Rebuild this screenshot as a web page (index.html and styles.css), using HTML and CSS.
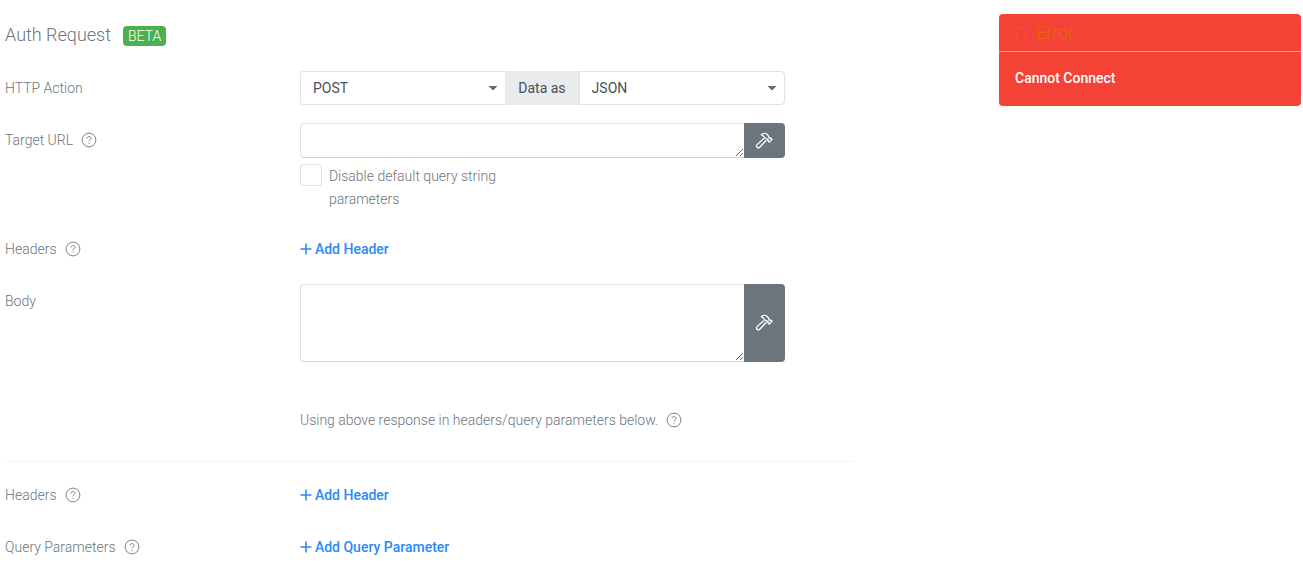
FILE: index.html
```html
<!DOCTYPE html>
<html lang="en">
  <head>
    <meta charset="UTF-8" />
    <meta name="viewport" content="width=device-width, initial-scale=1.0" />
    <title>Auth Request</title>
    <link rel="stylesheet" href="styles.css">
  </head>
  <body>
    <svg class="sprite" aria-hidden="true">
      <symbol id="icon-help" viewBox="0 0 16 16">
        <circle cx="8" cy="8" r="6.9" />
        <path d="M6 6.5C6 5.2 6.8 4.6 8 4.6s2 .7 2 1.7c0 1.4-1.9 1.4-1.9 3" />
        <path d="M8.1 10.6v1.2" />
      </symbol>
      <symbol id="icon-hammer" viewBox="0 0 18 18">
        <path d="M6.4 2.6C8 1.1 10.6 1 12.2 2.5l1.2 1.3c.5.8.2 1.6.7 2.2l.9.5.6-.6 1.4 1.4-2.8 2.8-1.4-1.4.4-.7-.6-.8c-.8-.4-1.6-.1-2.4-.9L9.2 5.1c-.3-1-1.4-1.7-2.8-2.5z" />
        <path d="M8.9 6.4l-6.8 6.2c-1.8 1.9.7 4.4 2.6 2.7l6.6-7.1" />
      </symbol>
      <symbol id="icon-plus" viewBox="0 0 12 12">
        <path d="M6 .5v11M.5 6h11" />
      </symbol>
    </svg>

    <form class="auth-form">
      <h1>Auth Request <span class="badge">BETA</span></h1>

      <div class="form-row">
        <label class="row-label" for="http-action">HTTP Action</label>
        <div class="field input-group">
          <select id="http-action">
            <option selected>POST</option>
            <option>GET</option>
          </select>
          <label class="group-text" for="data-as">Data as</label>
          <select id="data-as">
            <option selected>JSON</option>
            <option>Form</option>
          </select>
        </div>
      </div>

      <div class="form-row">
        <div class="row-label">
          <label for="target-url">Target URL</label>
          <svg class="help"><use href="#icon-help" /></svg>
        </div>
        <div class="field">
          <div class="input-group">
            <textarea id="target-url" class="url-box" rows="1"></textarea>
            <button type="button" class="build-btn" aria-label="Build URL">
              <svg class="hammer"><use href="#icon-hammer" /></svg>
            </button>
          </div>
          <div class="check">
            <input type="checkbox" id="disable-params" />
            <label for="disable-params">Disable default query string parameters</label>
          </div>
        </div>
      </div>

      <div class="form-row">
        <div class="row-label">
          Headers
          <svg class="help"><use href="#icon-help" /></svg>
        </div>
        <div class="field">
          <button type="button" class="add-btn">
            <svg class="plus"><use href="#icon-plus" /></svg>Add Header
          </button>
        </div>
      </div>

      <div class="form-row">
        <label class="row-label" for="body">Body</label>
        <div class="field input-group">
          <textarea id="body" class="body-box" rows="3"></textarea>
          <button type="button" class="build-btn" aria-label="Build body">
            <svg class="hammer"><use href="#icon-hammer" /></svg>
          </button>
        </div>
      </div>

      <div class="form-row note-row">
        <div class="note">
          Using above response in headers/query parameters below.
          <svg class="help"><use href="#icon-help" /></svg>
        </div>
      </div>

      <hr />

      <div class="form-row">
        <div class="row-label">
          Headers
          <svg class="help"><use href="#icon-help" /></svg>
        </div>
        <div class="field">
          <button type="button" class="add-btn">
            <svg class="plus"><use href="#icon-plus" /></svg>Add Header
          </button>
        </div>
      </div>

      <div class="form-row">
        <div class="row-label">
          Query Parameters
          <svg class="help"><use href="#icon-help" /></svg>
        </div>
        <div class="field">
          <button type="button" class="add-btn">
            <svg class="plus"><use href="#icon-plus" /></svg>Add Query Parameter
          </button>
        </div>
      </div>
    </form>

    <div class="toast" role="alert">
      <div class="toast-header"><span class="toast-icon"></span>Error</div>
      <div class="toast-body">Cannot Connect</div>
    </div>
  </body>
</html>
```
FILE: styles.css
```css
:root {
  --text-color: #6c757d;
  --input-color: #495057;
  --border-color: #dee2e6;
  --link-color: #2a8af6;
  --danger-color: #f44336;
  --success-color: #4caf50;
}

* {
  margin: 0;
  padding: 0;
  box-sizing: border-box;
}

body {
  font-family: Roboto, "Liberation Sans", sans-serif;
  font-size: 14px;
  font-weight: 300;
  line-height: 23px;
  color: var(--text-color);
  background-color: #fff;
}

.sprite {
  display: none;
}

svg {
  fill: none;
  stroke: currentColor;
}

.auth-form {
  width: 66%;
  padding: 18px 5px 0;
}

h1 {
  display: flex;
  align-items: center;
  gap: 12px;
  height: 33px;
  margin-bottom: 20px;
  font-size: 18px;
  font-weight: 300;
}

.badge {
  margin-top: 2px;
  padding: 0 5px;
  border-radius: 4px;
  background-color: var(--success-color);
  color: #fff;
  font-size: 14px;
  line-height: 20px;
}

.form-row {
  display: grid;
  grid-template-columns: 34.7% 1fr;
  margin-bottom: 18px;
}

.row-label,
.note {
  display: flex;
  align-items: center;
  gap: 8px;
  height: 34px;
}

.field {
  max-width: 485px;
}

.input-group {
  display: flex;
}

.help {
  width: 16px;
  height: 16px;
  color: #7d8388;
}

select,
textarea {
  flex: 1;
  min-width: 0;
  border: 1px solid var(--border-color);
  border-radius: 4px;
  background-color: #fff;
  color: var(--input-color);
  font-family: inherit;
  font-size: 14px;
}

select {
  height: 34px;
  padding: 0 12px;
  appearance: none;
  background-image: linear-gradient(to bottom right, #6c6c6c 50%, transparent 50%),
    linear-gradient(to bottom left, #6c6c6c 50%, transparent 50%);
  background-position: right 8px center, right 12px center;
  background-size: 4px 5px;
  background-repeat: no-repeat;
}

select:first-child {
  border-right: none;
  border-radius: 4px 0 0 4px;
}

select:last-child {
  border-radius: 0 4px 4px 0;
}

.group-text {
  padding: 0 13px;
  background-color: #e9ecef;
  color: var(--input-color);
  font-weight: 400;
  line-height: 34px;
}

textarea {
  padding: 5px 12px;
  border-right: none;
  border-bottom-color: #ced4da;
  border-radius: 4px 0 0 4px;
  resize: vertical;
}

.url-box {
  height: 35px;
}

.body-box {
  height: 78px;
}

.build-btn {
  display: flex;
  align-items: center;
  justify-content: center;
  width: 41px;
  border: none;
  border-radius: 0 4px 4px 0;
  background-color: var(--text-color);
  color: #fff;
  cursor: pointer;
}

.hammer {
  width: 18px;
  height: 18px;
  stroke-width: 1.3;
}

.check {
  display: flex;
  gap: 7px;
  width: 224px;
  margin-top: 6px;
  padding-bottom: 3px;
}

.check label {
  padding-top: 1px;
}

.check input {
  flex: none;
  width: 22px;
  height: 22px;
  appearance: none;
  border: 1px solid var(--border-color);
  border-radius: 3px;
}

.check input:checked {
  background-color: var(--link-color);
}

.add-btn {
  display: flex;
  align-items: center;
  gap: 3px;
  height: 34px;
  border: none;
  background: none;
  color: var(--link-color);
  font-family: inherit;
  font-size: 14px;
  font-weight: 500;
  cursor: pointer;
}

.plus {
  width: 12px;
  height: 12px;
  stroke-width: 1.6;
}

.note-row {
  margin-top: 41px;
  margin-bottom: 24px;
}

.note {
  grid-column: 2;
}

hr {
  margin-bottom: 16px;
  border: none;
  border-top: 1px solid #f5f5f5;
}

.toast {
  position: fixed;
  top: 14px;
  right: 2px;
  width: 302px;
  border-radius: 4px;
  background-color: var(--danger-color);
}

.toast-header {
  display: flex;
  align-items: center;
  gap: 10px;
  height: 38px;
  padding: 0 17px;
  border-bottom: 1px solid #e8a09b;
  color: #e66a00;
  font-size: 18px;
}

.toast-icon {
  width: 10px;
  height: 12px;
  border: 1px solid #f0532c;
}

.toast-body {
  padding: 15px 16px 16px;
  color: #fff;
  font-weight: 500;
}
```
